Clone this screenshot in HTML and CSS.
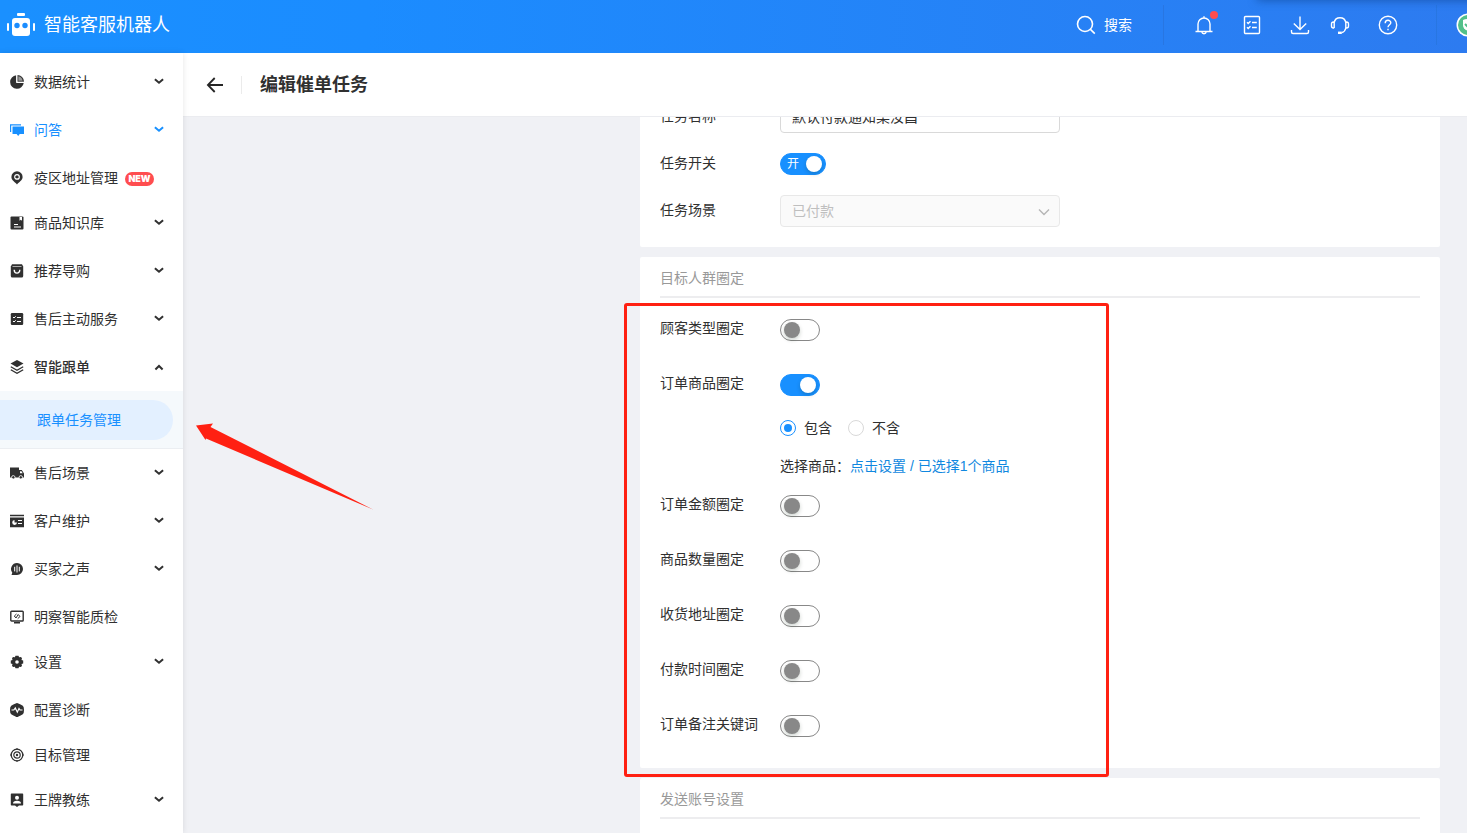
FILE: index.html
```html
<!DOCTYPE html>
<html lang="zh-CN">
<head>
<meta charset="utf-8">
<meta name="viewport" content="width=device-width, initial-scale=1">
<title>智能客服机器人</title>
<link rel="stylesheet" href="styles.css">
</head>
<body>
<svg class="sprite" aria-hidden="true">
  <symbol id="down" viewBox="0 0 10 10"><path d="M.9 2.200 5 5.700 9.100 2.200" fill="none" stroke="currentColor" stroke-width="2"/></symbol>
  <symbol id="up" viewBox="0 0 10 10"><path d="M1.400 7.500 5 4 8.600 7.500" fill="none" stroke="currentColor" stroke-width="2"/></symbol>
</svg>
<header class="topbar">
  <a class="brand" href="#">
    <svg class="brand-logo" width="28" height="24" viewBox="0 0 28 24" fill="#fff"><rect x="10" y="0" width="8" height="3" rx="1"/><rect x="5" y="5" width="18" height="18" rx="3"/><rect x="0" y="10" width="2" height="8" rx="1"/><rect x="26" y="10" width="2" height="8" rx="1"/><circle cx="10" cy="12.500" r="2.700" fill="#1b8dff"/><circle cx="18" cy="12.500" r="2.700" fill="#1b8dff"/></svg>
    <span>智能客服机器人</span>
  </a>
  <div class="tools">
    <button class="search" type="button">
      <svg width="20" height="20" viewBox="0 0 20 20" fill="none" stroke="#fff" stroke-width="1.600"><circle cx="9" cy="9" r="7.500"/><path d="m14.200 14.200 4.600 4.400"/></svg>
      <span>搜索</span>
    </button>
    <nav class="tool-icons">
      <button class="tool bell" type="button" aria-label="通知"><svg width="20" height="20" viewBox="0 0 20 20" fill="none" stroke="#fff" stroke-width="1.400"><path d="M1.500 16.500h17M4 16.500V9a6 6 0 0 1 12 0v7.500M7.800 17c.4 2.300 4 2.300 4.400 0M10 3V1.200"/></svg><i class="dot"></i></button>
      <button class="tool list" type="button" aria-label="任务"><svg width="20" height="20" viewBox="0 0 20 20" fill="none" stroke="#fff" stroke-width="1.400"><rect x="2.500" y="1.500" width="15" height="17" rx="1"/><path d="m5 7.200 1.200 1.200L8.500 6.200M5 12.200l1.200 1.200 2.300-2.200M10 7.500h4.800M10 12.500h4.800"/></svg></button>
      <button class="tool" type="button" aria-label="下载"><svg width="20" height="20" viewBox="0 0 20 20" fill="none" stroke="#fff" stroke-width="1.400"><path d="M10 1.500v13M3.800 8.500l6.200 6 6.200-6M1.500 15v2q0 1.500 1.500 1.500h14q1.500 0 1.500-1.500v-2"/></svg></button>
      <button class="tool headset" type="button" aria-label="客服"><svg width="20" height="20" viewBox="0 0 20 20" fill="none" stroke="#fff" stroke-width="1.400"><path d="M4.200 13V7.500a5.900 5.900 0 0 1 11.600 0V13q-.6 3.500-4 4.700M4.200 7H3.500q-2 0-2 2v2q0 2 2 2h.7M15.800 7h.7q2 0 2 2v2q0 2-2 2h-.7"/><path d="M8 17.800h3.800" stroke-width="2.400"/></svg></button>
      <button class="tool" type="button" aria-label="帮助"><svg width="20" height="20" viewBox="0 0 20 20" fill="none" stroke="#fff" stroke-width="1.400"><circle cx="10" cy="10" r="8.700"/><path d="M7.200 8.200c0-4 5.600-3.600 5.600-.400 0 2-2.800 2-2.800 4.400M10 13.800v1.500"/></svg></button>
    </nav>
    <button class="avatar" type="button" aria-label="账号"><svg width="24" height="24" viewBox="0 0 24 24"><circle cx="12" cy="12" r="11.500" fill="#fff"/><circle cx="12" cy="12" r="10" fill="#52c08a"/><path d="M7 7q5-2 10 0v5q0 4-5 6-5-2-5-6z" fill="#fff"/><path d="m9 11 2.500 2.500L15 10" fill="none" stroke="#52c08a" stroke-width="2"/></svg></button>
  </div>
</header>
<div class="shell">
  <aside class="sidebar">
    <nav class="menu">
      <a class="item" href="#"><svg class="ico" viewBox="0 0 14 14"><path d="M6.300 0.300A6.800 6.800 0 1 0 13.700 8H6.300z"/><path d="M7.300 0a6.700 6.700 0 0 1 6.700 6.800H7.300z"/><path d="M8.300 1.300a5.300 5.300 0 0 1 4.300 4.500H8.300z" fill="#999"/><path d="M6.800 0v7.400H14" fill="none" stroke="#fff"/></svg><span>数据统计</span><svg class="caret"><use href="#down"/></svg></a>
      <a class="item active" href="#"><svg class="ico" viewBox="0 0 14 14"><path d="M.6 9V1.800H11" fill="none" stroke="currentColor" stroke-width="1.200"/><path d="M2.500 3.500H14V11H9.800L8.200 13 6.600 11H2.500z"/></svg><span>问答</span><svg class="caret"><use href="#down"/></svg></a>
      <a class="item leaf" href="#"><svg class="ico" viewBox="0 0 14 14"><path d="M7 .2a5.600 5.600 0 0 1 5.600 5.700c0 3.500-3.700 4.800-5.600 7.600-1.900-2.800-5.600-4.100-5.600-7.600A5.600 5.600 0 0 1 7 .2z"/><circle cx="7" cy="5.900" r="2.300" fill="none" stroke="#fff" stroke-width="1.200"/></svg><span>疫区地址管理</span><b class="new">NEW</b></a>
      <a class="item" href="#"><svg class="ico" viewBox="0 0 14 14"><rect x=".5" y=".5" width="13" height="13" rx="1"/><path d="M9.500 1h2.500v3.700l-1.200-1-1.300 1z" fill="#fff"/><path d="M4 8.500h4M4 11h7" fill="none" stroke="#fff"/></svg><span>商品知识库</span><svg class="caret"><use href="#down"/></svg></a>
      <a class="item" href="#"><svg class="ico" viewBox="0 0 14 14"><path d="M2 .3h10l1.200 2.200v9.500q0 1.500-1.500 1.500H2.300Q.8 13.500.8 12V2.500z"/><path d="M2.500 2.500h9" stroke="#aaa"/><path d="M4.200 5.700c0 4.500 5.600 4.500 5.600 0" fill="none" stroke="#fff" stroke-width="1.400"/></svg><span>推荐导购</span><svg class="caret"><use href="#down"/></svg></a>
      <a class="item" href="#"><svg class="ico" viewBox="0 0 14 14"><rect x=".8" y="1" width="12.400" height="12" rx="1.200"/><path d="m3 5 1 1 1.700-1.700M3 9l1 1 1.700-1.700M7 5.500h4M7 9.500h4" fill="none" stroke="#fff"/></svg><span>售后主动服务</span><svg class="caret"><use href="#down"/></svg></a>
      <a class="item open" href="#"><svg class="ico" viewBox="0 0 14 14"><path d="M7 0l6.500 3.500L7 7.300.5 3.500z"/><path d="M.8 6.700 7 10.200l6.200-3.500M.8 9.800 7 13.300l6.200-3.500" fill="none" stroke="currentColor" stroke-width="1.300"/></svg><span>智能跟单</span><svg class="caret"><use href="#up"/></svg></a>
      <div class="submenu"><a class="subitem" href="#">跟单任务管理</a></div>
      <a class="item" href="#"><svg class="ico" viewBox="0 0 14 14"><path d="M0 1.500h9V4h2.800L14 7.500V11.500H0z"/><path d="M10 5.200h1.500l1.200 2.100H10z" fill="#fff"/><circle cx="3.300" cy="11.300" r="1.700" stroke="#fff" stroke-width=".8"/><circle cx="10.800" cy="11.300" r="1.700" stroke="#fff" stroke-width=".8"/></svg><span>售后场景</span><svg class="caret"><use href="#down"/></svg></a>
      <a class="item" href="#"><svg class="ico" viewBox="0 0 14 14"><path d="M0 .8h14v1.400H0zM0 3.400h14v9.800H0z"/><path d="M4.500 6v2.500H7A2.400 2.400 0 0 1 2.200 8.500 2.400 2.400 0 0 1 4.500 6z" fill="#fff"/><path d="M8 6.500h4M8 9.500h4" stroke="#fff" stroke-width="1.200"/></svg><span>客户维护</span><svg class="caret"><use href="#down"/></svg></a>
      <a class="item" href="#"><svg class="ico" viewBox="0 0 14 14"><path d="M7 1a6 6 0 1 1 0 12H1.500l.8-2.300A6 6 0 0 1 7 1z"/><path d="M4.700 4.800v4.600M7 3.500v7M9.300 4.800v4.600" stroke="#fff"/></svg><span>买家之声</span><svg class="caret"><use href="#down"/></svg></a>
      <a class="item leaf" href="#"><svg class="ico" viewBox="0 0 14 14"><rect x=".8" y="1.300" width="12.400" height="9.700" rx=".8" fill="none" stroke="currentColor" stroke-width="1.400"/><path d="M4 12h6v1.500H4z"/><path d="M6.500 4 4.300 6 6 8l2.200-3.500L10 6.500 7.700 8.700" fill="none" stroke="currentColor"/></svg><span>明察智能质检</span></a>
      <a class="item" href="#"><svg class="ico" viewBox="0 0 14 14"><path d="M5.500.8h3l.6 1.400L11 2l1 1.200-.5 1.700 1.700.6v3l-1.700.6.5 1.700L11 12l-1.900-.2-.6 1.400h-3l-.6-1.400L3 12l-1-1.200.5-1.700-1.700-.6v-3l1.700-.6L2 3.200 3 2l1.900.2z"/><circle cx="7" cy="7" r="1.800" fill="#fff"/></svg><span>设置</span><svg class="caret"><use href="#down"/></svg></a>
      <a class="item leaf" href="#"><svg class="ico" viewBox="0 0 14 14"><path d="M7 0q1 0 5.800 2.800Q14 3.500 14 7t-1.200 4.200Q8 14 7 14t-5.800-2.800Q0 10.500 0 7t1.200-4.200Q6 0 7 0z"/><path d="M1.500 7h2.300l1.500-2 2 4.200L9 5.500 10 7h2.500" fill="none" stroke="#fff" stroke-width="1.200"/></svg><span>配置诊断</span></a>
      <a class="item leaf" href="#"><svg class="ico" viewBox="0 0 14 14"><g fill="none" stroke="currentColor"><circle cx="7" cy="7" r="5.800" stroke-width="1.300"/><circle cx="7" cy="7" r="3.200" stroke-width="1.200"/><path d="M7 0v2M7 12v2M0 7h2M12 7h2"/></g><circle cx="7" cy="7" r="1.200"/></svg><span>目标管理</span></a>
      <a class="item" href="#"><svg class="ico" viewBox="0 0 14 14"><path d="M1.500.5h11q.7 0 .7.700v10.600q0 .7-.7.700H9L7 14l-2-1.500H1.500q-.7 0-.7-.7V1.200q0-.7.700-.7z"/><circle cx="7" cy="4.800" r="2" fill="#fff"/><path d="M3 10.500q0-2.700 4-2.700t4 2.700z" fill="#fff"/></svg><span>王牌教练</span><svg class="caret"><use href="#down"/></svg></a>
    </nav>
  </aside>
  <main class="main">
    <div class="pagehead">
      <button class="back" type="button" aria-label="返回"><svg width="18" height="18" viewBox="0 0 18 18" fill="none" stroke="#262626" stroke-width="1.800"><path d="M17 9H2M8.700 2 1.900 9l6.800 7"/></svg></button>
      <h1>编辑催单任务</h1>
    </div>
    <div class="content">
      <form class="stack">
        <section class="card basic">
          <div class="field"><label for="name">任务名称</label><input class="text" id="name" type="text" value="默认付款通知栗汝昌"></div>
          <div class="field"><label for="enabled">任务开关</label><span class="switch-text"><input class="switch wide" id="enabled" type="checkbox" checked><span>开</span></span></div>
          <div class="field"><label for="scene">任务场景</label><span class="select"><select id="scene" disabled><option>已付款</option></select><svg width="12" height="12" viewBox="0 0 12 12" fill="none" stroke="#b5b5b5" stroke-width="1.400"><path d="m1 3.500 5 5 5-5"/></svg></span></div>
        </section>
        <section class="card target">
          <h2>目标人群圈定</h2>
          <div class="row"><label for="t1">顾客类型圈定</label><input class="switch" id="t1" type="checkbox"></div>
          <div class="row goods"><label for="t2">订单商品圈定</label>
            <div class="controls">
              <input class="switch" id="t2" type="checkbox" checked>
              <div class="radios"><label><input type="radio" name="mode" checked>包含</label><label><input type="radio" name="mode">不含</label></div>
              <p class="pick">选择商品：<a href="#">点击设置 / 已选择1个商品</a></p>
            </div>
          </div>
          <div class="row"><label for="t3">订单金额圈定</label><input class="switch" id="t3" type="checkbox"></div>
          <div class="row"><label for="t4">商品数量圈定</label><input class="switch" id="t4" type="checkbox"></div>
          <div class="row"><label for="t5">收货地址圈定</label><input class="switch" id="t5" type="checkbox"></div>
          <div class="row"><label for="t6">付款时间圈定</label><input class="switch" id="t6" type="checkbox"></div>
          <div class="row"><label for="t7">订单备注关键词</label><input class="switch" id="t7" type="checkbox"></div>
          <div class="highlight"></div>
        </section>
        <section class="card account"><h2>发送账号设置</h2></section>
      </form>
      <svg class="arrow" width="178" height="88" viewBox="0 0 178 88"><path d="M0 2.500 17 .500 14.500 4 177 86.500 10 15.500 9.500 17z" fill="#ff2012"/></svg>
    </div>
  </main>
</div>
</body>
</html>
```

FILE: styles.css
```css
* { box-sizing: border-box; }
body {
  margin: 0;
  height: 100vh;
  display: flex;
  flex-direction: column;
  overflow: hidden;
  color: #303030;
  background: #f0f1f5;
  font: 14px/22px "Liberation Sans", "Noto Sans CJK SC", sans-serif;
}
a { color: inherit; text-decoration: none; }
button { padding: 0; border: 0; background: none; color: inherit; font: inherit; cursor: pointer; }
h1, h2, p { margin: 0; }
svg { display: block; flex: none; }
.sprite { position: absolute; width: 0; height: 0; }

.topbar {
  position: relative;
  flex: none;
  display: flex;
  justify-content: space-between;
  height: 53px;
  padding-left: 7px;
  overflow: hidden;
  color: #fff;
  background: linear-gradient(90deg, #1a90ff, #1b8cff 25%, #2d7bf0);
}
.topbar::after {
  content: "";
  position: absolute;
  top: -10px;
  right: -10px;
  width: 220px;
  height: 10px;
  box-shadow: 0 0 10px #0a3a8099;
}
.brand { display: flex; align-items: center; gap: 9px; padding-bottom: 4px; font-size: 18px; }
.tools { display: flex; align-items: center; padding-bottom: 3px; }
.search { display: flex; align-items: center; gap: 8px; padding-right: 31px; }
.tool-icons {
  display: flex;
  align-items: center;
  gap: 28px;
  height: 40px;
  padding: 0 38px 0 30px;
  border-left: 1px solid #2876e2;
  border-right: 1px solid #2876e2;
}
.tool { position: relative; }
.headset { margin-left: -8px; }
.dot { position: absolute; top: -4px; right: -4px; width: 8px; height: 8px; border-radius: 50%; background: #ff4d4f; }
.avatar { width: 11px; margin-left: 19px; overflow: hidden; }

.shell { flex: 1; min-height: 0; display: flex; }
.sidebar { flex: none; width: 183px; background: #fff; box-shadow: 0 0 6px #0000001a; z-index: 1; overflow: hidden; }
.menu { padding-top: 5px; }
.item { display: flex; align-items: center; gap: 10px; height: 48px; padding: 0 19px 0 10px; }
.leaf { height: 45px; padding-top: 3px; }
.active { color: #1890ff; }
.open { font-weight: 500; }
.ico { width: 14px; height: 14px; fill: currentColor; }
.caret { width: 10px; height: 10px; margin-left: auto; }
.new {
  width: 29px;
  margin: 2px 0 0 -3px;
  border-radius: 7px;
  background: #ff4d4f;
  color: #fff;
  font: 900 9px/14px Inter, sans-serif;
  text-align: center;
}
.submenu { padding: 9px 10px 8px 0; background: #f5f9fc; border-bottom: 1px solid #ebeef2; }
.subitem { display: block; padding-left: 37px; border-radius: 0 20px 20px 0; background: #e3f0ff; color: #1890ff; line-height: 40px; }

.main { flex: 1; min-width: 0; display: flex; flex-direction: column; }
.pagehead { flex: none; display: flex; align-items: center; height: 64px; padding-left: 23px; background: #fff; border-bottom: 1px solid #ebecf0; }
.back { padding-right: 17px; border-right: 1px solid #ebebeb; }
.pagehead h1 { padding-left: 18px; font-size: 18px; line-height: 28px; }
.content { flex: 1; min-height: 0; position: relative; overflow: hidden; }
.stack { display: flex; flex-direction: column; gap: 10px; max-width: 800px; margin: -36px 27px 0 auto; }
.card { position: relative; padding: 10px 20px 0; border-radius: 2px; background: #fff; }
.card h2 { margin-bottom: 19px; padding-bottom: 7px; border-bottom: 2px solid #ededef; color: #999; font-size: 14px; font-weight: 400; }
.basic { display: flex; flex-direction: column; gap: 15px; padding: 20px; }
.field { display: grid; grid-template-columns: 120px 280px; align-items: center; height: 32px; }
.field > label { padding-bottom: 2px; }
.text, .select select { width: 100%; height: 32px; padding: 0 11px 2px; border: 1px solid #d9d9d9; border-radius: 4px; background: #fff; color: #303030; font: inherit; }
.select { position: relative; }
.select select { display: block; appearance: none; padding-bottom: 0; border-color: #e8e8e8; background: #fafafa; color: #bfbfbf; opacity: 1; }
.select svg { position: absolute; top: 11px; right: 10px; }

.row { display: grid; grid-template-columns: 120px 1fr; height: 24px; margin-bottom: 31px; }
.row .switch { margin-top: 2px; }
.goods { height: auto; margin-bottom: 16px; }
.switch { appearance: none; display: block; width: 40px; height: 22px; margin: 0; padding: 2px; border: 1px solid #888; border-radius: 11px; background: #fff; }
.switch::before { content: ""; display: block; width: 16px; height: 16px; margin-left: 1px; border-radius: 50%; background: #888; box-shadow: 0 2px 4px #00230b33; }
.switch:checked { border-color: #1890ff; background: #1890ff; }
.switch:checked::before { margin: 0 1px 0 auto; background: #fff; }
.wide { width: 46px; }
.switch-text { position: relative; width: 46px; }
.switch-text span { position: absolute; left: 7px; top: 0; color: #fff; font-size: 12px; pointer-events: none; }
.radios { display: flex; gap: 16px; margin: 21px 0 16px; }
.radios label { display: flex; align-items: center; gap: 8px; }
.radios input { appearance: none; width: 16px; height: 16px; margin: 0; padding: 3px; border: 1px solid #d9d9d9; border-radius: 50%; }
.radios input:checked { border-color: #1890ff; background: #1890ff content-box; }
.pick a { color: #1088e0; }
.account { height: 120px; }
.highlight { position: absolute; top: 46px; left: -16px; width: 485px; height: 474px; border: 3px solid #ff2012; border-radius: 3px; z-index: 1; pointer-events: none; }
.target { z-index: 1; }
.arrow { position: absolute; left: 13px; top: 306px; }
```
